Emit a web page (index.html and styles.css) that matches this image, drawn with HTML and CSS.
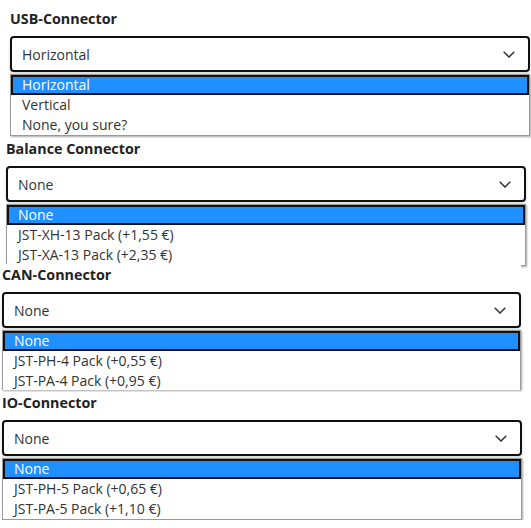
FILE: index.html
```html
<!DOCTYPE html>
<html>
<head>
<meta charset="utf-8">
<link rel="stylesheet" href="styles.css">
</head>
<body>
<div class="page">
  <section class="field field-1">
    <div class="label">USB-Connector</div>
    <div class="select">
      <span class="value">Horizontal</span>
      <svg class="chev" width="12" height="7" viewBox="0 0 12 7"><path d="M0.7 0.7 L6 6 L11.3 0.7" fill="none" stroke="#333" stroke-width="1.5"/></svg>
    </div>
    <ul class="list">
      <li class="opt selected">Horizontal</li>
      <li class="opt">Vertical</li>
      <li class="opt">None, you sure?</li>
    </ul>
  </section>
  <section class="field field-2">
    <div class="label">Balance Connector</div>
    <div class="select">
      <span class="value">None</span>
      <svg class="chev" width="12" height="7" viewBox="0 0 12 7"><path d="M0.7 0.7 L6 6 L11.3 0.7" fill="none" stroke="#333" stroke-width="1.5"/></svg>
    </div>
    <ul class="list">
      <li class="opt selected">None</li>
      <li class="opt">JST-XH-13 Pack (+1,55 €)</li>
      <li class="opt">JST-XA-13 Pack (+2,35 €)</li>
    </ul>
  </section>
  <section class="field field-3">
    <div class="label">CAN-Connector</div>
    <div class="select">
      <span class="value">None</span>
      <svg class="chev" width="12" height="7" viewBox="0 0 12 7"><path d="M0.7 0.7 L6 6 L11.3 0.7" fill="none" stroke="#333" stroke-width="1.5"/></svg>
    </div>
    <ul class="list list-cut">
      <li class="opt selected">None</li>
      <li class="opt">JST-PH-4 Pack (+0,55 €)</li>
      <li class="opt">JST-PA-4 Pack (+0,95 €)</li>
    </ul>
  </section>
  <section class="field field-4">
    <div class="label">IO-Connector</div>
    <div class="select">
      <span class="value">None</span>
      <svg class="chev" width="12" height="7" viewBox="0 0 12 7"><path d="M0.7 0.7 L6 6 L11.3 0.7" fill="none" stroke="#333" stroke-width="1.5"/></svg>
    </div>
    <ul class="list">
      <li class="opt selected">None</li>
      <li class="opt">JST-PH-5 Pack (+0,65 €)</li>
      <li class="opt">JST-PA-5 Pack (+1,10 €)</li>
    </ul>
  </section>
</div>
</body>
</html>
```
FILE: styles.css
```css
html, body {
  margin: 0;
  padding: 0;
  background: #fff;
}
body {
  font-family: "Open Sans", "Liberation Sans", sans-serif;
  font-size: 14px;
  color: #333;
}
.page {
  display: flex;
  flex-direction: column;
  padding-top: 8px;
}
.field {
  width: 520px;
  display: flex;
  flex-direction: column;
  background: #fff;
}
.field-1 { margin-left: 10px; }
.field-2 { margin-left: 6px; margin-top: 2px; }
.field-3 { margin-left: 2px; margin-top: -2px; width: 519px; }
.field-4 { margin-left: 2px; margin-top: 2px; }
.label {
  font-weight: 700;
  font-size: 14.3px;
  line-height: 19px;
  color: #222;
  padding-top: 1px;
}
.select {
  margin-top: 8px;
  height: 36px;
  box-sizing: border-box;
  border: 2px solid #111;
  border-radius: 4px;
  display: flex;
  align-items: center;
  justify-content: space-between;
  padding: 0 13px 0 10px;
  box-shadow: 0 2px 3px rgba(0,0,0,0.15);
  background: #fff;
}
.value {
  line-height: 20px;
  color: #333;
  padding-top: 1px;
}
.chev { display: block; margin-top: 1px; }
.list {
  list-style: none;
  margin: 2px 0 0;
  padding: 0;
  border: 1px solid #9a9a9a;
  box-shadow: 1px 1px 2px rgba(0,0,0,0.35);
  background: #fff;
}
.list-cut {
  height: 60px;
  overflow: hidden;
  border-bottom: none;
  box-sizing: border-box;
}
.opt {
  height: 20px;
  line-height: 20px;
  padding-left: 11px;
  color: #333;
  box-sizing: border-box;
  white-space: nowrap;
}
.opt.selected {
  background: #1e90ff;
  color: #fff;
  border: 2px solid #111;
  padding-left: 9px;
  line-height: 16px;
}
```
